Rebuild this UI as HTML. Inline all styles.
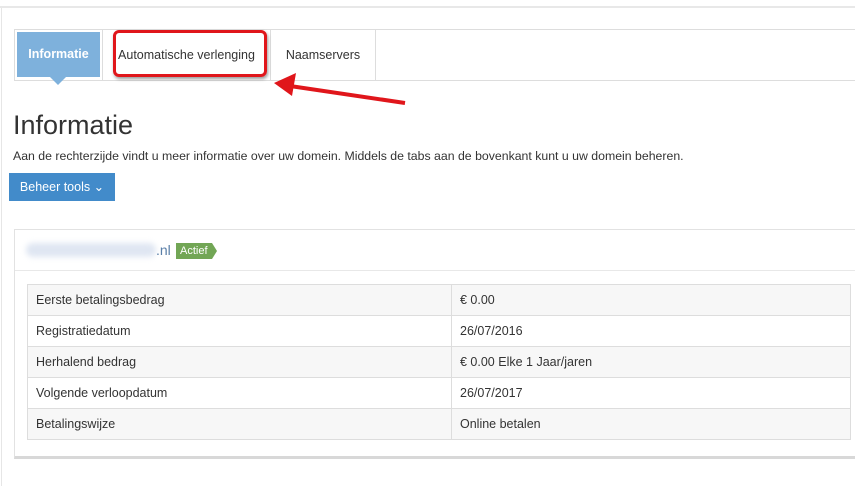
<!DOCTYPE html><html><head><style>
body{margin:0;width:855px;height:486px;background:#fff;font-family:"Liberation Sans",sans-serif;color:#333;position:relative;overflow:hidden}
.a{position:absolute}
td{border:1px solid #ddd;padding:0 8px;font-size:12.5px;height:30px}
</style></head><body>
<div class="a" style="left:0;top:6px;width:855px;height:2px;background:#e8e8e8"></div>
<div class="a" style="left:1px;top:8px;width:1px;height:478px;background:#e6e6e6"></div>
<div class="a" style="left:14px;top:29px;width:841px;height:50px;border:1px solid #ddd;border-right:none"></div>
<div class="a" style="left:102px;top:30px;width:1px;height:50px;background:#ddd"></div>
<div class="a" style="left:270px;top:30px;width:1px;height:50px;background:#ddd"></div>
<div class="a" style="left:375px;top:30px;width:1px;height:50px;background:#ddd"></div>
<div class="a" style="left:17px;top:32px;width:83px;height:45px;background:#7eb1dc;color:#fff;font-size:12.5px;font-weight:600;line-height:45px;text-align:center">Informatie</div>
<div class="a" style="left:50px;top:77px;border-left:8px solid transparent;border-right:8px solid transparent;border-top:8px solid #7eb1dc"></div>
<div class="a" style="left:103px;top:30px;width:167px;line-height:50px;text-align:center;font-size:12.5px">Automatische verlenging</div>
<div class="a" style="left:271px;top:30px;width:104px;line-height:50px;text-align:center;font-size:12.5px">Naamservers</div>
<div class="a" style="left:113px;top:30px;width:148px;height:41px;border:3px solid #e0161b;border-radius:6px;box-shadow:1px 2px 3px rgba(0,0,0,.4)"></div>
<svg class="a" style="left:0;top:0" width="855" height="486"><line x1="405" y1="103" x2="290" y2="86" stroke="#e0161b" stroke-width="4"/><polygon points="274,83 296,73 292,96" fill="#e0161b"/></svg>
<div class="a" style="left:13px;top:110px;font-size:27px;color:#333">Informatie</div>
<div class="a" style="left:13px;top:149px;font-size:12.3px">Aan de rechterzijde vindt u meer informatie over uw domein. Middels de tabs aan de bovenkant kunt u uw domein beheren.</div>
<div class="a" style="left:9px;top:173px;width:106px;height:28px;background:#428bca;color:#fff;font-size:12.5px;line-height:28px;text-align:center">Beheer tools ⌄</div>
<div class="a" style="left:14px;top:229px;width:841px;height:226px;border:1px solid #e2e2e2;border-right:none;border-bottom:3px solid #d8d8d8"></div>
<div class="a" style="left:15px;top:270px;width:840px;height:1px;background:#e8e8e8"></div>
<div class="a" style="left:26px;top:243px;width:130px;height:14px;background:#dfe6f2;border-radius:7px;filter:blur(3px)"></div>
<div class="a" style="left:156px;top:242px;font-size:14px;color:#5a7fa8">.nl</div>
<div class="a" style="left:176px;top:243px;width:36px;height:16px;background:#72a655;color:#fff;font-size:11px;line-height:16px;padding-left:4px;box-sizing:border-box">Actief</div>
<div class="a" style="left:212px;top:243px;border-top:8px solid transparent;border-bottom:8px solid transparent;border-left:5px solid #72a655"></div>
<table class="a" style="left:27px;top:284px;width:824px;border-collapse:collapse">
<tr style="background:#f7f7f7"><td style="width:407px">Eerste betalingsbedrag</td><td>€ 0.00</td></tr>
<tr><td>Registratiedatum</td><td>26/07/2016</td></tr>
<tr style="background:#f7f7f7"><td>Herhalend bedrag</td><td>€ 0.00 Elke 1 Jaar/jaren</td></tr>
<tr><td>Volgende verloopdatum</td><td>26/07/2017</td></tr>
<tr style="background:#f7f7f7"><td>Betalingswijze</td><td>Online betalen</td></tr>
</table>
</body></html>
